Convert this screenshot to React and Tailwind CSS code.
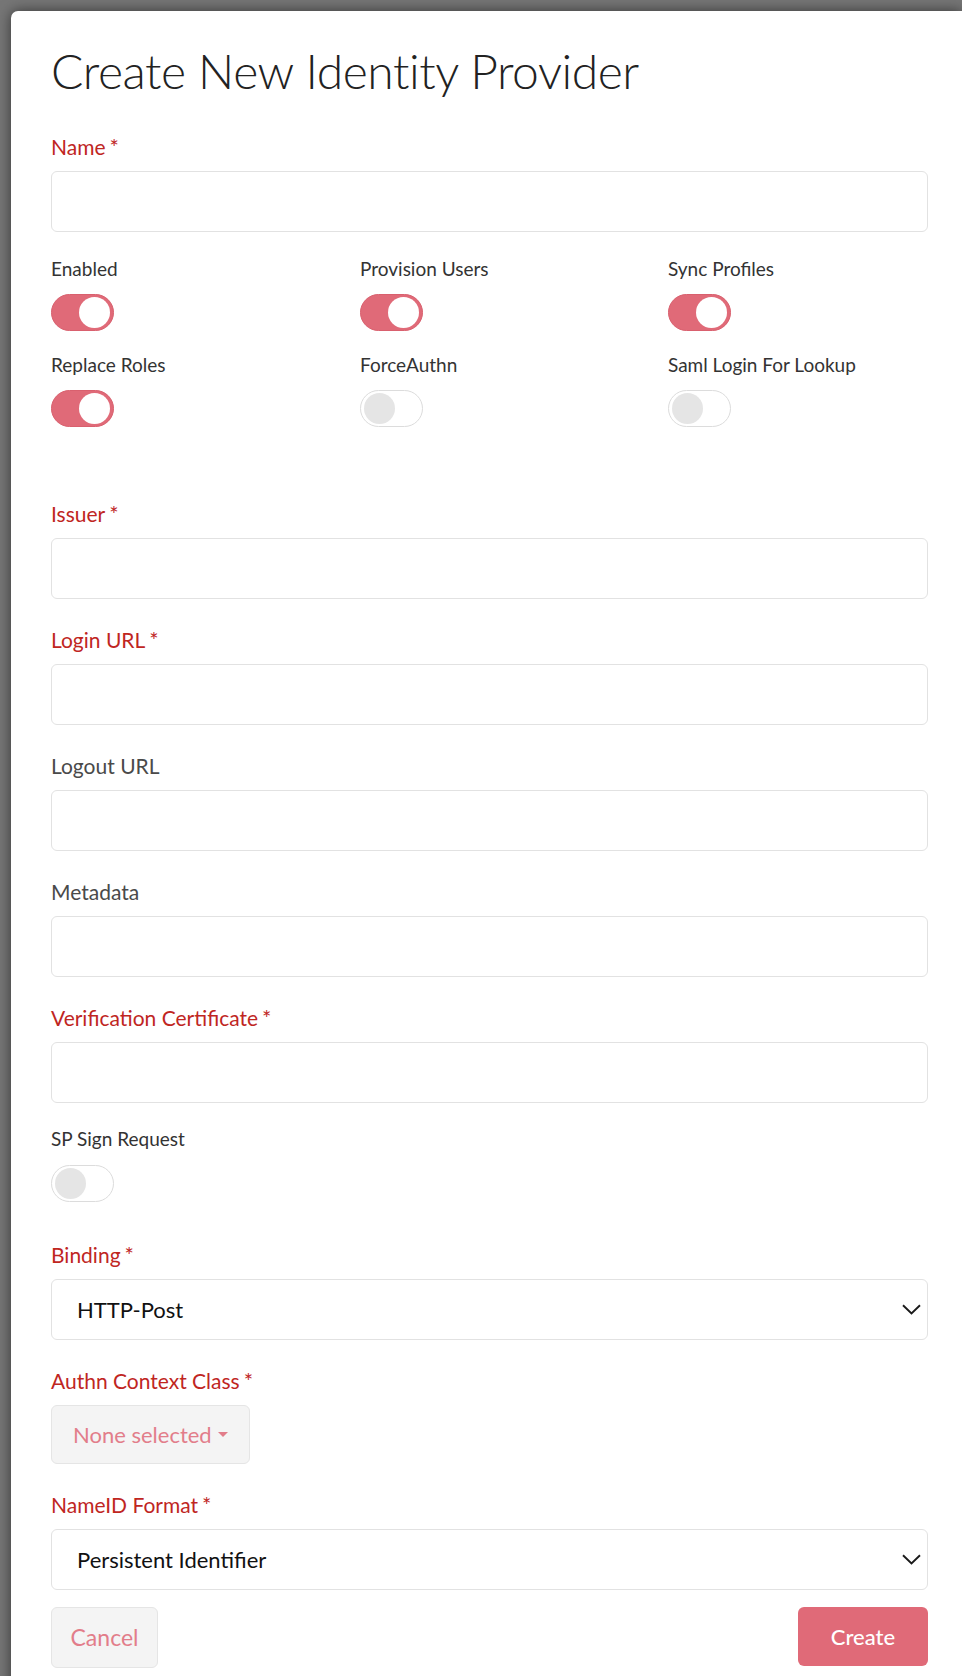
import { useState } from "react";

const RED = "text-[#c0261f]";

const Toggle = ({ on }) => (
  <div
    className={`flex items-center w-[63px] h-[37px] rounded-full border p-[3px] ${
      on ? "bg-[#e06a78] border-[#d9606e] justify-end" : "bg-white border-[#dcdcdc] justify-start"
    }`}
  >
    <div
      className={`w-[31px] h-[31px] rounded-full ${on ? "bg-white" : "bg-[#e5e5e5]"}`}
    />
  </div>
);

const FieldLabel = ({ children, required }) => (
  <label
    className={`block h-[26px] text-[21px] leading-[26px] ${required ? RED : "text-[#4a4a4a]"}`}
  >
    {children}
    {required && <span className="ml-1 text-[22px] leading-none">*</span>}
  </label>
);

const TextField = ({ label, required }) => (
  <div className="mb-[28px]">
    <FieldLabel required={required}>{label}</FieldLabel>
    <input
      type="text"
      className="mt-[11px] block w-full h-[61px] rounded-[6px] border border-[#e2e2e2] bg-white px-4 outline-none"
    />
  </div>
);

const Chevron = () => (
  <svg width="19" height="11" viewBox="0 0 19 11" fill="none">
    <path d="M1 1.2L9.5 9.5L18 1.2" stroke="#1a1a1a" strokeWidth="1.9" />
  </svg>
);

const SelectField = ({ label, value }) => (
  <div className="mb-[28px]">
    <FieldLabel required>{label}</FieldLabel>
    <div className="mt-[11px] flex items-center justify-between h-[61px] rounded-[6px] border border-[#e2e2e2] bg-white pl-[25px] pr-[6px]">
      <span className="text-[22px] text-[#111]">{value}</span>
      <Chevron />
    </div>
  </div>
);

const toggles = [
  { label: "Enabled", on: true },
  { label: "Provision Users", on: true },
  { label: "Sync Profiles", on: true },
  { label: "Replace Roles", on: true },
  { label: "ForceAuthn", on: false },
  { label: "Saml Login For Lookup", on: false },
];

export default function App() {
  const [open] = useState(true);

  return (
    <div
      className="h-[1676px] overflow-hidden bg-[#767676] pt-[11px] pl-[11px]"
      style={{ fontFamily: "Lato, 'Open Sans', sans-serif" }}
    >
      {open && (
        <div className="h-[1700px] bg-white rounded-tl-[7px] shadow-[0_0_14px_rgba(0,0,0,0.55)] pt-[30px] pl-[40px] pr-[34px]">
          {/* Title */}
          <h1 className="text-[48px] leading-[59px] font-light tracking-[-0.45px] text-[#222] mb-[34px]">
            Create New Identity Provider
          </h1>

          {/* Name */}
          <div>
            <FieldLabel required>Name</FieldLabel>
            <input
              type="text"
              className="mt-[11px] block w-full h-[61px] rounded-[6px] border border-[#e2e2e2] bg-white px-4 outline-none"
            />
          </div>

          {/* Switches */}
          <div className="grid grid-cols-[309px_308px_1fr] gap-y-[22px] mt-[25px]">
            {toggles.map((t) => (
              <div key={t.label}>
                <div className="text-[19px] leading-[24px] text-[#333] mb-[13px]">{t.label}</div>
                <Toggle on={t.on} />
              </div>
            ))}
          </div>

          <div className="mt-[74px]">
            <TextField label="Issuer" required />
            <TextField label="Login URL" required />
            <TextField label="Logout URL" />
            <TextField label="Metadata" />
            <div>
              <FieldLabel required>Verification Certificate</FieldLabel>
              <input
                type="text"
                className="mt-[11px] block w-full h-[61px] rounded-[6px] border border-[#e2e2e2] bg-white px-4 outline-none"
              />
            </div>
          </div>

          {/* SP Sign Request */}
          <div className="mt-[24px]">
            <div className="text-[19px] leading-[24px] text-[#333] mb-[14px]">SP Sign Request</div>
            <Toggle on={false} />
          </div>

          <div className="mt-[40px]">
            <SelectField label="Binding" value="HTTP-Post" />

            <div className="mb-[28px]">
              <FieldLabel required>Authn Context Class</FieldLabel>
              <button className="mt-[11px] flex items-center gap-[6px] h-[59px] px-[21px] rounded-[6px] border border-[#e5e5e5] bg-[#f4f4f4] text-[22px] text-[#e27d8a]">
                <span>None selected</span>
                <span className="w-0 h-0 border-l-[5px] border-r-[5px] border-t-[5px] border-l-transparent border-r-transparent border-t-[#e27d8a]" />
              </button>
            </div>

            <div>
              <FieldLabel required>NameID Format</FieldLabel>
              <div className="mt-[11px] flex items-center justify-between h-[61px] rounded-[6px] border border-[#e2e2e2] bg-white pl-[25px] pr-[6px]">
                <span className="text-[22px] text-[#111]">Persistent Identifier</span>
                <Chevron />
              </div>
            </div>
          </div>

          {/* Footer */}
          <div className="flex items-start justify-between mt-[17px]">
            <button className="h-[61px] w-[107px] rounded-[6px] border border-[#e5e5e5] bg-[#f4f4f4] text-[23px] text-[#e27d8a]">
              Cancel
            </button>
            <button className="h-[59px] w-[130px] rounded-[6px] bg-[#e06a78] text-[22px] font-medium text-white">
              Create
            </button>
          </div>
        </div>
      )}
    </div>
  );
}
